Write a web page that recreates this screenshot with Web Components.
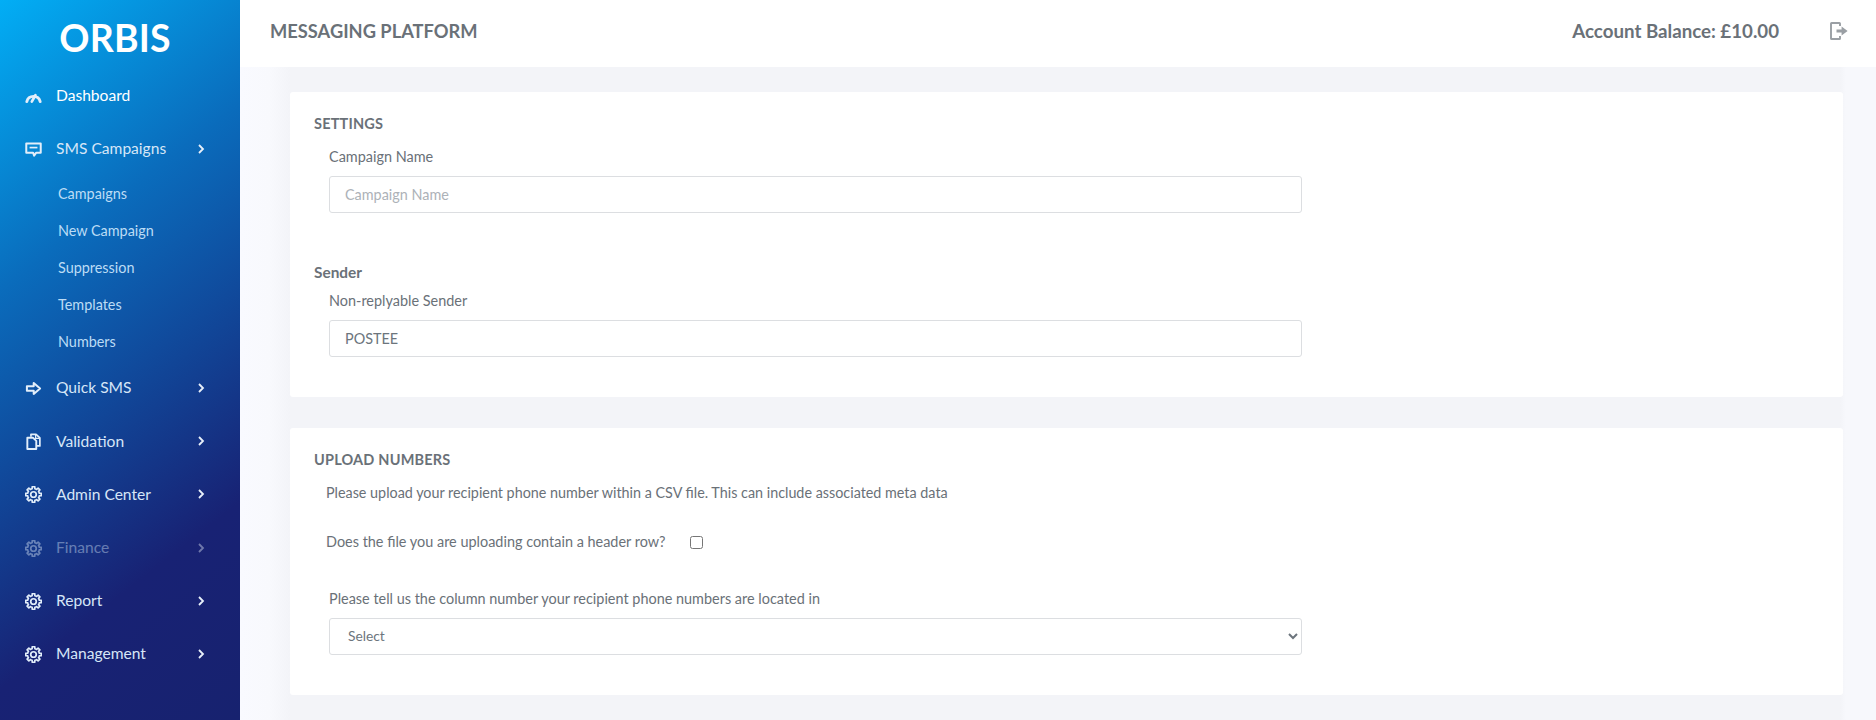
<!DOCTYPE html>
<html lang="en">
<head>
<meta charset="utf-8">
<title>Orbis</title>
<style>
html,body{margin:0;padding:0;background:#f3f4f8;}
body{font-family:"Lato","Open Sans",sans-serif;}
</style>
</head>
<body>
<app-shell>
  <side-bar slot="side">
    <nav-item icon="gauge" active>Dashboard</nav-item>
    <nav-item icon="message" arrow>SMS Campaigns</nav-item>
    <nav-sub>Campaigns</nav-sub>
    <nav-sub>New Campaign</nav-sub>
    <nav-sub>Suppression</nav-sub>
    <nav-sub>Templates</nav-sub>
    <nav-sub style="margin-bottom:1px">Numbers</nav-sub>
    <nav-item icon="arrow" arrow>Quick SMS</nav-item>
    <nav-item icon="copy" arrow>Validation</nav-item>
    <nav-item icon="gear" arrow>Admin Center</nav-item>
    <nav-item icon="gear" arrow disabled>Finance</nav-item>
    <nav-item icon="gear" arrow>Report</nav-item>
    <nav-item icon="gear" arrow>Management</nav-item>
  </side-bar>
  <top-bar slot="top" title-text="MESSAGING PLATFORM" balance="Account Balance: £10.00"></top-bar>
  <form-card heading="SETTINGS" style="height:305px">
    <text-field label="Campaign Name" placeholder="Campaign Name" style="margin-top:11px"></text-field>
    <sub-head style="margin-top:48px">Sender</sub-head>
    <text-field label="Non-replyable Sender" value="POSTEE" style="margin-top:7px"></text-field>
  </form-card>
  <form-card heading="UPLOAD NUMBERS" style="height:267px;margin-top:31px">
    <help-line style="margin-top:11px">Please upload your recipient phone number within a CSV file. This can include associated meta data</help-line>
    <check-line style="margin-top:27px">Does the file you are uploading contain a header row?</check-line>
    <select-field label="Please tell us the column number your recipient phone numbers are located in" style="margin-top:35px"></select-field>
  </form-card>
</app-shell>
<script>
function gearPath(cx,cy,rOut,rIn,n){
  let d='';const step=Math.PI*2/n;
  for(let i=0;i<n;i++){
    const a=i*step-Math.PI/2;
    const pts=[[rIn,a-step*.5],[rIn,a-step*.3],[rOut,a-step*.2],[rOut,a+step*.2],[rIn,a+step*.3]];
    pts.forEach((p,j)=>{
      const x=(cx+p[0]*Math.cos(p[1])).toFixed(2),y=(cy+p[0]*Math.sin(p[1])).toFixed(2);
      d+=(i===0&&j===0?'M':'L')+x+' '+y+' ';
    });
  }
  return d+'Z';
}
const ICONS={
  gauge:'<path d="M1.7 12.8A6.5 6.5 0 0 1 14.3 12.8" fill="none" stroke="currentColor" stroke-width="2.7" stroke-linecap="round"/><path d="M6.4 12.8L9.8 6.8" fill="none" stroke="currentColor" stroke-width="2.5" stroke-linecap="round"/>',
  message:'<path d="M1.2 2.4H14.8V11H10.6L8.6 13.8L7.6 11H1.2Z" fill="none" stroke="currentColor" stroke-width="1.9" stroke-linejoin="round"/><path d="M4.3 6.2H11.7" stroke="currentColor" stroke-width="1.6"/>',
  arrow:'<path d="M1.8 5.8H8.2V2.9L14.2 8L8.2 13.1V10.2H1.8Z" fill="none" stroke="currentColor" stroke-width="1.9" stroke-linejoin="round"/>',
  copy:'<path d="M5.6 3.6V1.2H10.4L14 4.6V12.2H11" fill="none" stroke="currentColor" stroke-width="1.6" stroke-linejoin="round"/><path d="M2.2 4.4H7.4L10.6 7.4V15H2.2Z" fill="none" stroke="currentColor" stroke-width="1.8" stroke-linejoin="round"/><path d="M10 1.6V5H13.6" fill="none" stroke="currentColor" stroke-width="1.2"/>',
  gear:'<path d="'+gearPath(8,8,7.4,5.6,8)+'" fill="none" stroke="currentColor" stroke-width="1.6" stroke-linejoin="round"/><circle cx="8" cy="8" r="2.6" fill="none" stroke="currentColor" stroke-width="1.6"/>'
};

class AppShell extends HTMLElement{
  constructor(){super();this.attachShadow({mode:'open'}).innerHTML=`
  <style>
    :host{display:flex;min-height:720px;width:100%;background:#f3f4f8;}
    .main{flex:1;min-width:0;display:flex;flex-direction:column;}
    .content{flex:1;padding:25px 33px 25px 50px;background:linear-gradient(90deg,#f9faff 0,#f8f9fd 30px,#f3f4f8 50px,#f3f4f8 calc(100% - 36px),#f7f8fc calc(100% - 30px),#f7f8fc 100%);}
  </style>
  <slot name="side"></slot>
  <div class="main"><slot name="top"></slot><div class="content"><slot></slot></div></div>`;}
}
class SideBar extends HTMLElement{
  constructor(){super();this.attachShadow({mode:'open'}).innerHTML=`
  <style>
    :host{display:flex;flex-direction:column;flex:none;width:240px;height:720px;box-sizing:border-box;color:#fff;
      background:linear-gradient(142deg,#02aef5 0%,#0a6cbc 32%,#104a9c 52%,#182274 76%,#17226f 100%);}
    .logo{height:69.5px;box-sizing:border-box;padding-top:13px;padding-right:10px;text-align:center;font-size:37.4px;line-height:50px;font-weight:700;color:#fff;letter-spacing:.2px;}
  </style>
  <div class="logo">ORBIS</div>
  <slot></slot>`;}
}
class NavItem extends HTMLElement{
  constructor(){super();const ic=ICONS[this.getAttribute('icon')]||'';
    this.attachShadow({mode:'open'}).innerHTML=`
  <style>
    :host{display:flex;align-items:center;height:53.2px;padding-left:25px;padding-right:35.5px;font-size:15.6px;color:#d6e6f7;}
    :host([active]){color:#fff;}
    :host([disabled]){opacity:.42;}
    svg{display:block;flex:none;}
    .ic{width:17px;height:17px;color:#e2eefa;}
    .t{flex:1;margin-left:14px;margin-bottom:2px;}
    .ch{width:8px;height:12px;color:#e8f0fa;margin-bottom:1px;}
  </style>
  <svg class="ic" viewBox="0 0 16 16">${ic}</svg>
  <span class="t"><slot></slot></span>
  ${this.hasAttribute('arrow')?'<svg class="ch" viewBox="0 0 8 12"><path d="M2 2L6 6L2 10" fill="none" stroke="currentColor" stroke-width="1.8"/></svg>':''}`;}
}
class NavSub extends HTMLElement{
  constructor(){super();this.attachShadow({mode:'open'}).innerHTML=`
  <style>:host{display:block;height:37px;line-height:35px;padding-left:58px;font-size:14.4px;color:#bcdcf5;}</style><slot></slot>`;}
}
class TopBar extends HTMLElement{
  constructor(){super();this.attachShadow({mode:'open'}).innerHTML=`
  <style>
    :host{display:flex;align-items:center;height:67px;background:#fff;padding:0 28px 6px 30px;box-sizing:border-box;color:#6a7178;}
    .t{flex:1;font-size:18.3px;font-weight:700;}
    .b{font-size:18.7px;font-weight:700;margin-right:51px;}
    svg{display:block;color:#9a9fa4;}
  </style>
  <div class="t">${this.getAttribute('title-text')}</div>
  <div class="b">${this.getAttribute('balance')}</div>
  <svg width="18" height="18" viewBox="0 0 18 18"><path d="M10 4V1.6Q10 1 9.4 1H1.6Q1 1 1 1.6V16.4Q1 17 1.6 17H9.4Q10 17 10 16.4V14" fill="none" stroke="currentColor" stroke-width="1.9"/><path d="M6.5 7.4H11.6V4.6L17.6 9L11.6 13.4V10.6H6.5Z" fill="currentColor"/></svg>`;}
}
class FormCard extends HTMLElement{
  constructor(){super();this.attachShadow({mode:'open'}).innerHTML=`
  <style>
    :host{display:block;box-sizing:border-box;background:#fff;border-radius:3px;padding:21px 24px 0;color:#656c73;}
    .h{font-size:14.5px;line-height:22px;font-weight:700;color:#6a7178;letter-spacing:.2px;}
  </style>
  <div class="h">${this.getAttribute('heading')}</div>
  <slot></slot>`;}
}
const fieldCss=`
    :host{display:block;margin-left:15px;width:973px;color:#6a7178;}
    label{display:block;font-size:14.45px;line-height:22px;margin-bottom:8px;}
    input,select{display:block;width:100%;box-sizing:border-box;height:37px;border:1px solid #dcdee1;border-radius:3px;background:#fff;font:inherit;font-size:14.4px;color:#6c757d;outline:none;}
    input{padding:0 15px;}
    select{padding:0 14px 2px;font-size:13.8px;}
    input::placeholder{color:#adb2b8;opacity:1;}`;
class TextField extends HTMLElement{
  constructor(){super();const p=this.getAttribute('placeholder')||'',v=this.getAttribute('value')||'';
    this.attachShadow({mode:'open'}).innerHTML=`<style>${fieldCss}</style>
    <label for="f">${this.getAttribute('label')}</label><input id="f" type="text" placeholder="${p}" value="${v}">`;}
}
class SelectField extends HTMLElement{
  constructor(){super();this.attachShadow({mode:'open'}).innerHTML=`<style>${fieldCss}</style>
    <label for="f">${this.getAttribute('label')}</label><select id="f"><option>Select</option></select>`;}
}
class SubHead extends HTMLElement{
  constructor(){super();this.attachShadow({mode:'open'}).innerHTML=`<style>:host{display:block;font-size:15.4px;line-height:22px;font-weight:700;color:#6a7178;}</style><slot></slot>`;}
}
class HelpLine extends HTMLElement{
  constructor(){super();this.attachShadow({mode:'open'}).innerHTML=`<style>:host{display:block;margin-left:12px;font-size:14.35px;line-height:22px;color:#6a7178;}</style><slot></slot>`;}
}
class CheckLine extends HTMLElement{
  constructor(){super();this.attachShadow({mode:'open'}).innerHTML=`<style>
    :host{display:flex;align-items:center;margin-left:12px;font-size:14.45px;line-height:22px;color:#6a7178;}
    input{width:13px;height:13px;margin:0 0 0 24px;}
  </style><span><slot></slot></span><input type="checkbox">`;}
}
[['app-shell',AppShell],['side-bar',SideBar],['nav-item',NavItem],['nav-sub',NavSub],['top-bar',TopBar],['form-card',FormCard],['text-field',TextField],['select-field',SelectField],['sub-head',SubHead],['help-line',HelpLine],['check-line',CheckLine]].forEach(([n,c])=>customElements.define(n,c));
</script>
</body>
</html>
